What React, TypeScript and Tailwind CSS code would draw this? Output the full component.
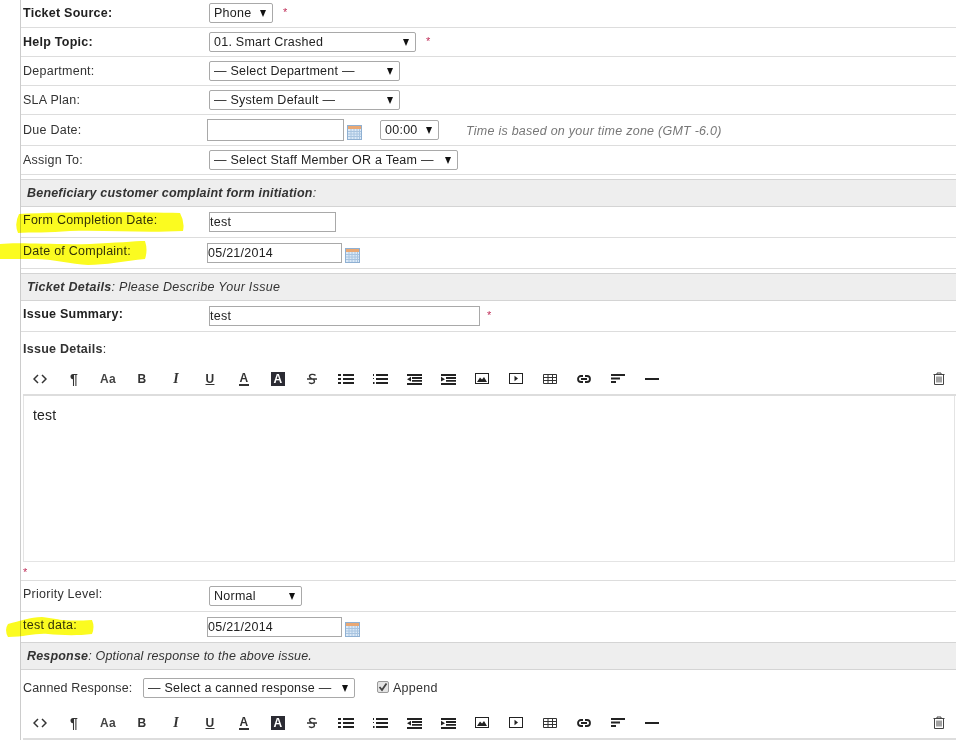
import type { ReactNode } from "react";

function Select({ text, width, className = "" }: { text: string; width: string; className?: string }) {
  return (
    <div className={`flex h-5 items-center justify-between rounded-[2px] border border-[#a9a9a9] bg-white pl-[4px] pr-[6px] text-[12.5px] tracking-[0.25px] text-[#222] ${width} ${className}`}>
      <span className="whitespace-nowrap">{text}</span>
      <span className="h-0 w-0 border-x-[3.5px] border-t-[7px] border-x-transparent border-t-[#111]" />
    </div>
  );
}

function Input({ value = "", width, className = "" }: { value?: string; width: string; className?: string }) {
  return (
    <div className={`flex h-5 items-center border border-[#a9a9a9] bg-white text-[12.5px] tracking-[0.25px] text-[#222] ${width} ${className}`}>
      {value}
    </div>
  );
}

function Calendar({ className = "" }: { className?: string }) {
  return (
    <svg width="15" height="15" viewBox="0 0 15 15" className={className}>
      <rect x="0.5" y="0.5" width="14" height="14" fill="#dbe9f7" stroke="#8fb0d2" />
      <rect x="1" y="1" width="13" height="3" fill="#e9a874" />
      <path d="M1 6.5h13M1 9h13M1 11.5h13M4 4v10M7 4v10M10 4v10M12.5 4v10" stroke="#a8c4e0" strokeWidth="1" />
    </svg>
  );
}

function Star({ className = "" }: { className?: string }) {
  return <span className={`text-[11px] leading-none text-[#c0305a] ${className}`}>*</span>;
}

function Row({ label, bold, h, labelTop, top, children }: {
  label: ReactNode; bold?: boolean; h: string; labelTop: string; top: string; children: ReactNode;
}) {
  return (
    <div className={`flex border-b border-[#ddd] pl-[2px] ${h}`}>
      <div className={`w-[186px] shrink-0 leading-4 ${labelTop} ${bold ? "font-bold text-[#222]" : ""}`}>{label}</div>
      <div className={`flex items-start ${top}`}>{children}</div>
    </div>
  );
}

function Header({ bold, text, className = "" }: { bold: string; text: string; className?: string }) {
  return (
    <div className={`flex h-[28px] items-center border-y border-[#d4d4d4] bg-[#eeeeee] pl-[6px] italic ${className}`}>
      <b>{bold}</b>
      <span>{text}</span>
    </div>
  );
}

function Glyph({ children, className = "" }: { children: ReactNode; className?: string }) {
  return <span className={`font-bold leading-none text-[#333] ${className}`}>{children}</span>;
}

function Lines({ kind }: { kind: "bullet" | "number" | "outdent" | "indent" }) {
  return (
    <svg width="16" height="12" viewBox="0 0 16 12" fill="#222">
      {kind === "bullet" && <path d="M0 1h3v2H0zM0 5h3v2H0zM0 9h3v2H0zM5 1h11v2H5zM5 5h11v2H5zM5 9h11v2H5z" />}
      {kind === "number" && <path d="M1 1h1v2H1zM1 5h1v1H1zM1 9h1.500v2H1zM4 1h12v2H4zM4 5h12v2H4zM4 9h12v2H4z" />}
      {kind === "outdent" && <path d="M1 1h15v2H1zM6 4h10v2H6zM6 7h10v1.800H6zM1 10h15v2H1zM5 3.800v4.700L1 6.200z" />}
      {kind === "indent" && <path d="M1 1h15v2H1zM6 4h10v2H6zM6 7h10v1.800H6zM1 10h15v2H1zM1 3.800v4.700L5 6.200z" />}
    </svg>
  );
}

function Toolbar({ className = "" }: { className?: string }) {
  const tools: ReactNode[] = [
    <svg width="14" height="10" viewBox="0 0 14 10" fill="none" stroke="#333" strokeWidth="1.500"><path d="M5 1 1 5l4 4M9 1l4 4-4 4" /></svg>,
    <Glyph className="text-[14px] text-[#222]">¶</Glyph>,
    <Glyph className="text-[12px] text-[#444]">Aa</Glyph>,
    <Glyph className="text-[12px]">B</Glyph>,
    <Glyph className="font-['Liberation_Serif'] text-[14px] italic text-[#222]">I</Glyph>,
    <Glyph className="text-[12px] underline">U</Glyph>,
    <Glyph className="border-b-2 border-[#333] px-px text-[12px]">A</Glyph>,
    <span className="flex h-3.5 w-3.5 items-center justify-center bg-[#2b2b33] text-[12px] font-bold leading-none text-white">A</span>,
    <svg width="10" height="12" viewBox="0 0 10 12" fill="none" stroke="#333" strokeWidth="1.400"><path d="M8.500 2.500C7 0.800 2.500 1 2.500 3.300 2.500 4.700 4 5.300 5 6M2 9.500c1.500 1.500 5.500 1.200 5.500-1 0-1-.7-1.800-1.500-2.500M0 6h10" /></svg>,
    <Lines kind="bullet" />,
    <Lines kind="number" />,
    <Lines kind="outdent" />,
    <Lines kind="indent" />,
    <svg width="14" height="11" viewBox="0 0 14 11"><rect x="0.500" y="0.500" width="13" height="10" fill="#fff" stroke="#222" /><path d="M2 9 5 4.500 7 6.500 9 4l3 5z" fill="#222" /></svg>,
    <svg width="14" height="11" viewBox="0 0 14 11"><rect x="0.500" y="0.500" width="13" height="10" fill="#fff" stroke="#222" /><path d="M5.500 2.800 9 5.500 5.500 8.200z" fill="#222" /></svg>,
    <svg width="14" height="10" viewBox="0 0 14 10" fill="none" stroke="#333"><path d="M0.500 0.500h13v9h-13zM0.500 3.500h13M0.500 6.500h13M5 0.500v9M9.500 0.500v9" /></svg>,
    <svg width="14" height="8" viewBox="0 0 14 8" fill="none" stroke="#222" strokeWidth="1.800"><path d="M6 1H4a3 3 0 0 0 0 6h2M8 1h2a3 3 0 0 1 0 6H8M4 4h6" /></svg>,
    <svg width="14" height="9" viewBox="0 0 14 9" fill="#222"><path d="M0 0h14v2H0zM0 3.500h9v2H0zM0 7h5v2H0z" /></svg>,
    <svg width="14" height="2" viewBox="0 0 14 2" fill="#222"><path d="M0 0h14v2H0z" /></svg>,
  ];
  return (
    <div className={`flex h-[33px] items-center border-b-2 border-[#ddd] bg-white pr-[11px] ${className}`}>
      {tools.map((tool, i) => (
        <div key={i} className="flex h-full w-[34px] items-center justify-center">{tool}</div>
      ))}
      <svg width="12" height="13" viewBox="0 0 12 13" fill="none" stroke="#444" className="ml-auto">
        <path d="M0.500 2.500h11M4 2.500V1h4v1.500M1.500 2.500h9v10h-9zM4 4.500v6M6 4.500v6M8 4.500v6" />
      </svg>
    </div>
  );
}

export default function App() {
  return (
    <div className="relative h-[740px] w-[956px] overflow-hidden bg-white pl-5 font-['Liberation_Sans',Arial,sans-serif] text-[12.5px] tracking-[0.25px] text-[#333]">
      <div className="h-full border-l border-[#ccc]">
        <Row label="Ticket Source:" bold h="h-[28px]" labelTop="pt-[5px]" top="pt-[3px]">
          <Select text="Phone" width="w-[64px]" />
          <Star className="ml-[10px] mt-[4px]" />
        </Row>
        <Row label="Help Topic:" bold h="h-[29px]" labelTop="pt-[6px]" top="pt-[4px]">
          <Select text="01. Smart Crashed" width="w-[207px]" />
          <Star className="ml-[10px] mt-[4px]" />
        </Row>
        <Row label="Department:" h="h-[29px]" labelTop="pt-[6px]" top="pt-[4px]">
          <Select text="— Select Department —" width="w-[191px]" />
        </Row>
        <Row label="SLA Plan:" h="h-[29px]" labelTop="pt-[6px]" top="pt-[4px]">
          <Select text="— System Default —" width="w-[191px]" />
        </Row>
        <Row label="Due Date:" h="h-[31px]" labelTop="pt-[7px]" top="pt-[4px]">
          <Input width="w-[137px] -ml-[2px]" className="h-[22px]" />
          <Calendar className="ml-[3px] mt-[6px]" />
          <Select text="00:00" width="w-[59px]" className="ml-[18px] mt-px" />
          <span className="ml-[27px] mt-[3px] whitespace-nowrap italic text-[#777]">Time is based on your time zone (GMT -6.0)</span>
        </Row>
        <Row label="Assign To:" h="h-[29px]" labelTop="pt-[6px]" top="pt-[4px]">
          <Select text="— Select Staff Member OR a Team —" width="w-[249px]" />
        </Row>

        <Header bold="Beneficiary customer complaint form initiation" text=":" className="mt-[4px] tracking-[0.2px]" />
        <Row label="Form Completion Date:" h="h-[31px]" labelTop="pt-[5px]" top="pt-[5px]">
          <Input value="test" width="w-[127px]" />
        </Row>
        <Row label="Date of Complaint:" h="h-[31px]" labelTop="pt-[5px]" top="pt-[5px]">
          <Input value="05/21/2014" width="w-[135px] -ml-[2px]" />
          <Calendar className="ml-[3px] mt-[5px]" />
        </Row>

        <Header bold="Ticket Details" text=": Please Describe Your Issue" className="mt-[4px] tracking-[0.3px]" />
        <Row label="Issue Summary:" bold h="h-[31px]" labelTop="pt-[5px]" top="pt-[5px]">
          <Input value="test" width="w-[271px]" />
          <Star className="ml-[7px] mt-[4px]" />
        </Row>
        <div className="pl-[2px]">
          <div className="flex h-[31px] items-start pt-[9px] leading-4"><b>Issue Details</b>:</div>
          <Toolbar />
          <div className="mr-px h-[166px] border-x border-b border-[#e4e4e4] px-[9px] pt-[9px] text-[14px] tracking-[0.2px] text-[#222]">test</div>
          <div className="h-[18px] pt-[4px] leading-none"><Star /></div>
        </div>
        <Row label="Priority Level:" h="h-[32px] border-t" labelTop="pt-[5px]" top="pt-[5px]">
          <Select text="Normal" width="w-[93px]" />
        </Row>
        <Row label="test data:" h="h-[30px] border-b-0" labelTop="pt-[5px]" top="pt-[5px]">
          <Input value="05/21/2014" width="w-[135px] -ml-[2px]" />
          <Calendar className="ml-[3px] mt-[5px]" />
        </Row>
        <Header bold="Response" text=": Optional response to the above issue." className="tracking-[0.18px]" />
        <div className="flex h-[37px] items-start pl-[2px] pt-[8px]">
          <span className="w-[120px] shrink-0 pt-[2px] leading-4 tracking-[0.15px]">Canned Response:</span>
          <Select text="— Select a canned response —" width="w-[212px]" />
          <span className="ml-[22px] mt-[3px] flex h-3 w-3 items-center justify-center rounded-[2px] border border-[#999] bg-[#e4e4e4]">
            <svg width="10" height="10" viewBox="0 0 10 10" fill="none" stroke="#444" strokeWidth="1.800"><path d="m1.500 5 2.500 3 4.500-6.500" /></svg>
          </span>
          <span className="ml-[4px] pt-[2px] leading-4">Append</span>
        </div>
        <div className="pl-[2px]">
          <Toolbar />
        </div>
      </div>

      {/* marker pen strokes over the labels */}
      <svg width="190" height="640" viewBox="0 0 190 640" className="pointer-events-none absolute left-0 top-0 mix-blend-multiply" fill="#fbfb20">
        <path d="M19 214 C60 212 130 212 180 213 Q185 222 183 231 C140 233 110 230 70 231 C50 233 30 232 18 233 Q14 224 19 214 Z" />
        <path d="M0 244 C20 242 50 245 90 244 C115 243 135 241 145 241 Q148 250 145 259 C125 261 105 265 88 265 C70 264 50 258 30 259 L0 259 Z" />
        <path d="M8 624 C20 621 30 617 42 617 C55 618 60 622 92 620 Q95 627 92 634 C75 636 60 635 48 634 C35 633 25 637 8 637 Q4 630 8 624 Z" />
      </svg>
    </div>
  );
}
